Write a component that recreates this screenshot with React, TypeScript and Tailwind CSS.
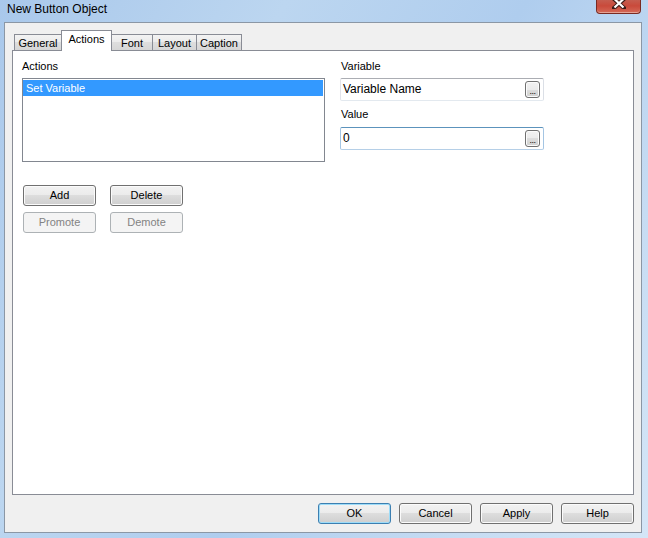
import React from "react";

const btnNormal =
  "border border-[#707070] rounded-[3px] bg-[linear-gradient(to_bottom,#f2f2f2_0%,#ebebeb_50%,#dddddd_50%,#cfcfcf_100%)] shadow-[inset_0_0_0_1px_#fbfbfb] text-black";
const btnDisabled =
  "border border-[#adb2b5] rounded-[3px] bg-[#f4f4f4] text-[#838383]";
const btnDefault =
  "border border-[#3c7fb1] rounded-[3px] bg-[linear-gradient(to_bottom,#f2f2f2_0%,#ebebeb_50%,#dddddd_50%,#cfcfcf_100%)] shadow-[inset_0_0_0_1px_#9edcf8] text-black";

function Ellipsis() {
  return (
    <div className="w-[15px] h-[17px] border border-[#707070] rounded-[3px] bg-[linear-gradient(to_bottom,#f2f2f2_0%,#ebebeb_50%,#dddddd_50%,#cfcfcf_100%)] shadow-[inset_0_0_0_1px_#fbfbfb] flex items-end justify-center pb-[2px]">
      <span className="text-[9px] leading-[8px] tracking-[-0.5px]">...</span>
    </div>
  );
}

function Tab({ label, selected, w, first }: { label: string; selected?: boolean; w: number; first?: boolean }) {
  if (selected) {
    return (
      <div
        className="relative z-10 -ml-px -mb-px h-[21px] border border-b-0 border-[#898c95] bg-white flex justify-center pt-[2px] text-[11px] leading-[13px]"
        style={{ width: w }}
      >
        {label}
      </div>
    );
  }
  return (
    <div
      className={`${first ? "ml-[2px]" : "-ml-px"} h-[16px] border border-b-0 border-[#898c95] bg-[linear-gradient(to_bottom,#f3f3f3_0%,#ebebeb_50%,#dedede_50%,#d6d6d6_100%)] flex justify-center pt-[2px] text-[11px] leading-[13px]`}
      style={{ width: w }}
    >
      {label}
    </div>
  );
}

export default function App() {
  return (
    <div className="w-[648px] h-[538px] flex flex-col overflow-hidden font-['Liberation_Sans',Arial,sans-serif] text-black bg-[linear-gradient(120deg,#a9c8eb_0%,#bcd6f0_30%,#afcdee_55%,#c6dcf3_80%,#d4e6f7_100%)]">
      {/* title bar */}
      <div className="h-[22px] flex items-start justify-between pl-[7px] pr-[7px]">
        <span className="text-[12px] leading-[16px] mt-[1px]">New Button Object</span>
        <div className="w-[45px] h-[14px] rounded-b-[4px] border border-t-0 border-[#7a2a22] bg-[linear-gradient(to_bottom,#c55d4f_0%,#c94a3b_45%,#d46a58_100%)] shadow-[inset_0_-1px_0_0_#e5a294] flex justify-center">
          <svg width="14" height="10" viewBox="0 0 14 10" className="mt-[-1px]">
            <path d="M2 0 L12 9 M12 0 L2 9" stroke="#3a1a16" strokeWidth="4" strokeLinecap="square" />
            <path d="M2.5 0 L11.5 8.5 M11.5 0 L2.5 8.5" stroke="#ffffff" strokeWidth="2.2" />
          </svg>
        </div>
      </div>

      {/* client area */}
      <div className="ml-[4px] w-[638px] h-[511px] border border-[#8b97a5] bg-[#f0f0f0] flex flex-col pt-[7px] pl-[7px]">
        {/* tabs */}
        <div className="h-[20px] flex items-end">
          <Tab label="General" w={48} first />
          <Tab label="Actions" w={51} selected />
          <Tab label="Font" w={42} />
          <Tab label="Layout" w={45} />
          <Tab label="Caption" w={46} />
        </div>
        {/* panel */}
        <div className="w-[622px] h-[445px] border border-[#898c95] bg-white pt-[9px] pl-[9px]">
          <div className="flex gap-[15px]">
            {/* left column */}
            <div className="flex flex-col w-[303px]">
              <div className="text-[11px] leading-[13px] mb-[5px]">Actions</div>
              <div className="h-[84px] border border-[#828790] bg-white pt-px">
                <div className="h-[16px] bg-[#3399ff] text-white text-[11px] leading-[16px] pl-[3px] mr-px">Set Variable</div>
              </div>
              <div className="flex gap-[14px] mt-[23px] pl-px">
                <button className={`w-[73px] h-[21px] text-[11px] leading-[13px] ${btnNormal}`}>Add</button>
                <button className={`w-[73px] h-[21px] text-[11px] leading-[13px] ${btnNormal}`}>Delete</button>
              </div>
              <div className="flex gap-[14px] mt-[6px] pl-px">
                <button className={`w-[73px] h-[21px] text-[11px] leading-[13px] ${btnDisabled}`}>Promote</button>
                <button className={`w-[73px] h-[21px] text-[11px] leading-[13px] ${btnDisabled}`}>Demote</button>
              </div>
            </div>
            {/* right column */}
            <div className="flex flex-col w-[204px]">
              <div className="text-[11px] leading-[13px] mb-[5px] pl-px">Variable</div>
              <div className="h-[23px] border border-[#abadb3] border-b-[#e3e9ef] border-l-[#e2e3ea] border-r-[#dbdfe6] rounded-[2px] bg-white flex items-center justify-between pl-[2px] pr-[3px]">
                <span className="text-[12px] leading-[14px] -mt-px">Variable Name</span>
                <Ellipsis />
              </div>
              <div className="text-[11px] leading-[13px] mt-[7px] mb-[6px] pl-px">Value</div>
              <div className="h-[23px] border border-[#5c93bc] border-b-[#b5cfe7] border-l-[#a4c5e3] border-r-[#a4c5e3] rounded-[2px] bg-white flex items-center justify-between pl-[2px] pr-[3px]">
                <span className="text-[12px] leading-[14px] -mt-px">0</span>
                <Ellipsis />
              </div>
            </div>
          </div>
        </div>
        {/* bottom buttons */}
        <div className="w-[622px] flex justify-end gap-[8px] mt-[8px]">
          <button className={`w-[73px] h-[21px] text-[11px] leading-[13px] ${btnDefault}`}>OK</button>
          <button className={`w-[73px] h-[21px] text-[11px] leading-[13px] ${btnNormal}`}>Cancel</button>
          <button className={`w-[73px] h-[21px] text-[11px] leading-[13px] ${btnNormal}`}>Apply</button>
          <button className={`w-[73px] h-[21px] text-[11px] leading-[13px] ${btnNormal}`}>Help</button>
        </div>
      </div>
    </div>
  );
}
